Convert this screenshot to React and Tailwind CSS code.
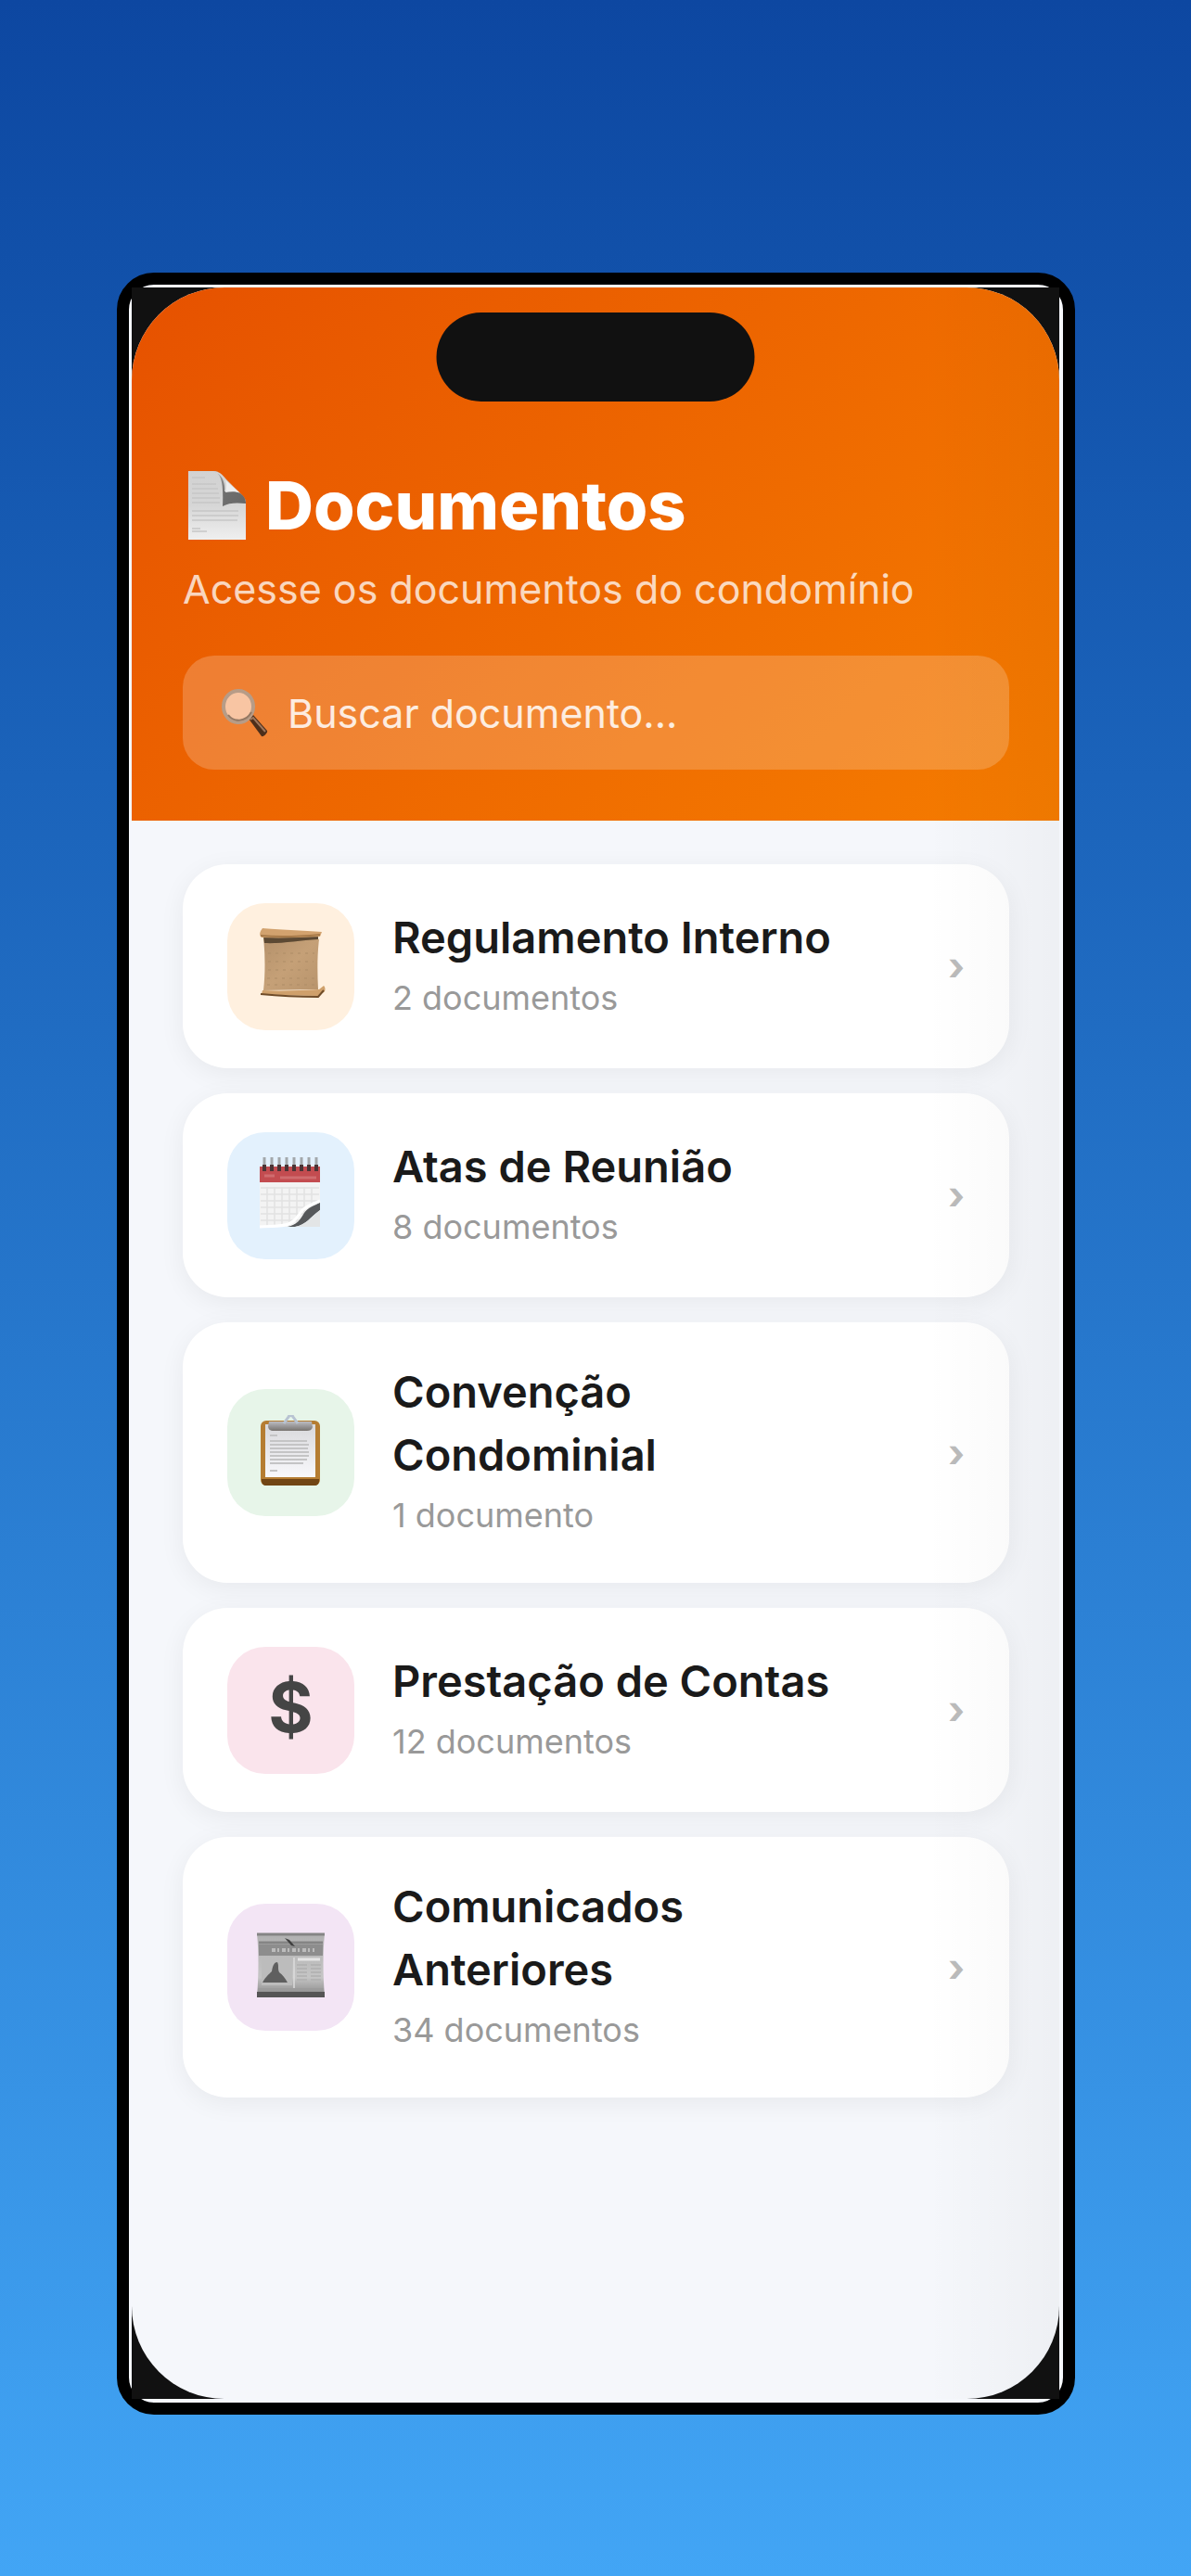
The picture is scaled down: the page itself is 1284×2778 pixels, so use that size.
import React from 'react';

const DocumentIcon = () => (
  <svg viewBox="0 0 64 76" className="h-[76px] w-16" aria-hidden="true">
    <defs>
      <linearGradient id="page" x1="0" y1="0" x2="0" y2="1">
        <stop offset="0" stopColor="#d2d2d2" />
        <stop offset="0.5" stopColor="#d6d6d6" />
        <stop offset="1" stopColor="#efefef" />
      </linearGradient>
      <linearGradient id="pageFold" x1="0" y1="0" x2="1" y2="1">
        <stop offset="0" stopColor="#a8a8a8" />
        <stop offset="0.5" stopColor="#6f6f6f" />
        <stop offset="1" stopColor="#666666" />
      </linearGradient>
    </defs>
    <path d="M1 1h29c5 1 8 4 12 9l15 15c4 4 6 6 6 10v40H1z" fill="url(#page)" />
    <path d="M5 8h14M5 15h26M5 20h28M5 25h29M5 30h30M5 35h30M5 44h50M5 49h50M5 54h49M5 63h9M5 66h16" stroke="#c6c6c6" strokeWidth="1.5" />
    <path d="M28 1c9 2 11 14 10 38 6-4 16-4 25-3 0-5-2-8-6-11-6-3-12-2-17-2 1-7-1-18-12-22z" fill="url(#pageFold)" />
    <path d="M40 10c3 3 2 9 1 14 5-1 10-1 15 0z" fill="#eeeeee" />
  </svg>
);

const SearchIcon = () => (
  <svg viewBox="0 0 52 52" className="size-[52px] shrink-0 opacity-80" aria-hidden="true">
    <path d="M30 32l5-4 15 17c1 2-4 7-6 6z" fill="#241a15" />
    <path d="M32 33l3-2 13 15" fill="none" stroke="#8a7466" strokeWidth="2" />
    <ellipse cx="19" cy="19" rx="16" ry="17" fill="#fbd7c0" stroke="#aaa39c" strokeWidth="4" />
    <path d="M8 28c6 8 19 8 25-3" fill="none" stroke="#7d7670" strokeWidth="2" />
  </svg>
);

const ScrollIcon = () => (
  <svg viewBox="0 0 82 82" className="size-[82px]" aria-hidden="true">
    <defs>
      <linearGradient id="parchment" x1="0" y1="0" x2="1" y2="1">
        <stop offset="0" stopColor="#b4916b" />
        <stop offset="0.5" stopColor="#c5a077" />
        <stop offset="1" stopColor="#b8946c" />
      </linearGradient>
    </defs>
    <path d="M11 10l60 2c-2 16-2 36-1 54l-59 1c2-18 2-38 0-57z" fill="url(#parchment)" />
    <path d="M11 8l59 1v3c-20 1-40 5-58 4z" fill="#5c4933" />
    <path d="M10 0c14 1 46 3 64 4l-2 5c-20 1-43 2-63 1-3-3-2-6 1-10z" fill="#d2a26e" />
    <path d="M8 8c20 2 43 1 64-1" fill="none" stroke="#a77a49" strokeWidth="2" />
    <path d="M10 67c20 1 42 0 61-1l5-4c2 2 2 6 0 7l-6 4c-20 0-41-1-61-2z" fill="#cfa06b" />
    <path d="M8 71c20 2 42 3 62 3l6-7" fill="none" stroke="#6f4c29" strokeWidth="2" />
    <path d="M16 27h50M16 36h49M16 45h48M15 54h51M15 61h52" stroke="#ad8c66" strokeWidth="1" strokeDasharray="3 5" />
  </svg>
);

const CalendarIcon = () => (
  <svg viewBox="0 0 82 82" className="size-[82px]" aria-hidden="true">
    <rect x="7" y="10" width="65" height="17" fill="#c34c50" />
    <path d="M12 20h11M29 22h39" stroke="#d06c6f" strokeWidth="3" />
    <path d="M7 27h65v23c-8 8-12 10-18 19-4 5-8 6-12 6H7z" fill="#f3f3f3" />
    <path d="M8 33h63M8 40h63M8 47h63M8 54h55M8 61h50M8 68h46M15 32v42M23 32v42M31 32v42M39 32v42M47 32v40M55 32v32M63 32v25" stroke="#e2e2e2" strokeWidth="1.5" />
    <path d="M72 49c-6 3-13 5-17 11-4 7-8 13-18 15h8c12-2 15-9 27-18z" fill="#56585a" />
    <path d="M72 57c-10 7-15 16-27 18h27z" fill="#e3e5e6" />
    <path d="M7 75c13-1 24 0 31-3 8-3 10-9 15-15 5-5 12-7 19-10" fill="none" stroke="#ffffff" strokeWidth="3" />
    <path d="M12 0v13M20 0v13M28 0v13M36 0v13M44 0v13M52 0v13M60 0v13M68 0v13" stroke="#a3a8ab" strokeWidth="3" />
    <path d="M12 8v7M20 8v7M28 8v7M36 8v7M44 8v7M52 8v7M60 8v7M68 8v7" stroke="#4b3436" strokeWidth="4" />
  </svg>
);

const ClipboardIcon = () => (
  <svg viewBox="0 0 82 82" className="size-[82px]" aria-hidden="true">
    <defs>
      <linearGradient id="sheet" x1="0" y1="0" x2="0" y2="1">
        <stop offset="0" stopColor="#d9d9dc" />
        <stop offset="1" stopColor="#f8f8fb" />
      </linearGradient>
      <linearGradient id="clip" x1="0" y1="0" x2="0" y2="1">
        <stop offset="0" stopColor="#bcbcc2" />
        <stop offset="1" stopColor="#77736f" />
      </linearGradient>
    </defs>
    <rect x="8" y="6" width="64" height="70" rx="6" fill="#b57d32" />
    <path d="M9 69h62v2c0 3-2 5-5 5H14c-3 0-5-2-5-5z" fill="#714514" />
    <path d="M13 10h54v57H13z" fill="url(#sheet)" />
    <path d="M18 22h8M18 28h40M18 32h42M18 36h41M18 40h42M18 44h42M18 48h40M18 52h36M18 60h8" stroke="#c4c4c5" strokeWidth="2" />
    <path d="M17 7h46l1 6c-1 3-3 4-6 4H22c-4 0-6-2-6-5z" fill="url(#clip)" />
    <path d="M33 9l5-7c1-2 4-2 5 0l5 7" fill="none" stroke="#b8c3d2" strokeWidth="3" />
  </svg>
);

const NewspaperIcon = () => (
  <svg viewBox="0 0 82 82" className="size-[82px]" aria-hidden="true">
    <defs>
      <linearGradient id="news" x1="0" y1="0" x2="0" y2="1">
        <stop offset="0" stopColor="#b0b0b0" />
        <stop offset="0.7" stopColor="#c5c5c5" />
        <stop offset="1" stopColor="#858585" />
      </linearGradient>
    </defs>
    <path d="M4 4h73c-2 20-2 44 0 68H4c2-24 2-48 0-68z" fill="url(#news)" />
    <path d="M4 5h73M6 14h69" stroke="#858585" strokeWidth="3" />
    <path d="M6 16h69v12H6z" fill="#8d8d8d" />
    <path d="M20 22h46" stroke="#bcbcbc" strokeWidth="4" strokeDasharray="4 2 2 3" />
    <path d="M34 9l5 2 6 7-4-1z" fill="#3f3f3f" />
    <path d="M48 32h24" stroke="#e4e4e4" strokeWidth="3" />
    <rect x="9" y="32" width="33" height="28" fill="#bcbcbc" />
    <path d="M10 57c4-7 7-9 10-12 1-7 3-10 6-10 2 4 0 7 2 11 4 3 6 6 9 11z" fill="#5f5f5f" />
    <path d="M47 38h11M47 42h11M47 46h11M47 50h11M47 54h11M62 38h11M62 42h11M62 46h11M62 50h11M62 54h11" stroke="#b0b0b0" strokeWidth="1.5" />
    <path d="M44 30v33" stroke="#dcdcdc" strokeWidth="1.5" />
    <path d="M5 64h71" stroke="#9b9b9b" strokeWidth="2" />
    <path d="M4 67h73v6H4z" fill="#555555" />
  </svg>
);

const DollarIcon = () => (
  <span className="pb-1.5 font-['Inter',sans-serif] text-[74px] leading-[82px] font-bold text-[#454545]">$</span>
);

const categories = [
  { title: 'Regulamento Interno', count: '2 documentos', Icon: ScrollIcon, color: 'bg-[#fff0df]' },
  { title: 'Atas de Reunião', count: '8 documentos', Icon: CalendarIcon, color: 'bg-[#e3f1fd]' },
  { title: 'Convenção Condominial', count: '1 documento', Icon: ClipboardIcon, color: 'bg-[#e7f5e9]' },
  { title: 'Prestação de Contas', count: '12 documentos', Icon: DollarIcon, color: 'bg-[#fae4ec]' },
  { title: 'Comunicados Anteriores', count: '34 documentos', Icon: NewspaperIcon, color: 'bg-[#f3e5f5]' },
];

const CategoryCard = ({ title, count, Icon, color }) => (
  <a
    href="#"
    className="flex min-h-[220px] items-center gap-[41px] rounded-[48px] bg-white px-12 py-[41px] shadow-[0_6px_28px_rgba(0,0,0,0.06)]"
  >
    <div className={`flex size-[137px] shrink-0 items-center justify-center rounded-[41px] ${color}`}>
      <Icon />
    </div>
    <div className="flex flex-1 flex-col gap-1 pb-[5px]">
      <h2 className="max-w-[500px] text-[47px] leading-[68px] font-semibold text-[#1a1a1a]">{title}</h2>
      <p className="text-[36px] leading-[54px] text-[#999999]">{count}</p>
    </div>
    <span className="text-[42px] leading-[50px] font-bold text-[#bbbbbb]" aria-hidden="true">›</span>
  </a>
);

const App = () => {
  return (
    <div className="flex min-h-screen flex-col bg-linear-to-b from-[#0d47a1] to-[#42a5f5] pt-[294px] pr-[125px] pb-[174px] pl-[126px] font-['Inter',sans-serif]">
      {/* Phone frame */}
      <div className="flex flex-1 flex-col rounded-[40px] border-[13px] border-black bg-[#f5f7fc] pt-[3px] pr-1 pb-1 pl-[3px]">
        <div className="flex flex-1 flex-col bg-[#111111]">
          <div className="relative flex flex-1 flex-col overflow-hidden rounded-[100px] bg-[#f5f7fb]">
            {/* Camera island */}
            <div className="absolute top-[27px] left-1/2 h-24 w-[343px] -translate-x-1/2 rounded-full bg-[#111111]" />

            <header className="bg-linear-135 from-[#e65100] to-[#f57c00] pt-[185px] pr-[54px] pb-[55px] pl-[55px]">
              <div className="flex items-center gap-5 pl-[5px]">
                <DocumentIcon />
                <h1 className="text-[72px] leading-[100px] font-extrabold text-white">Documentos</h1>
              </div>
              <p className="mt-2.5 text-[43px] leading-[60px] text-white/75">Acesse os documentos do condomínio</p>
              <div className="mt-[42px] flex h-[123px] items-center gap-5 rounded-[34px] bg-white/20 px-[41px]">
                <SearchIcon />
                <input
                  type="text"
                  aria-label="Buscar documento"
                  placeholder="Buscar documento..."
                  className="min-w-0 flex-1 bg-transparent text-[43px] leading-[60px] text-white outline-none placeholder:text-white/85"
                />
              </div>
            </header>

            <main className="flex flex-1 flex-col gap-[27px] pt-[47px] pr-[54px] pb-12 pl-[55px]">
              {categories.map((category) => (
                <CategoryCard key={category.title} {...category} />
              ))}
            </main>

            {/* Soft shade along the right edge */}
            <div className="pointer-events-none absolute inset-y-0 right-0 w-36 bg-linear-to-r from-black/0 to-black/3" />
          </div>
        </div>
      </div>
    </div>
  );
};

export default App;
